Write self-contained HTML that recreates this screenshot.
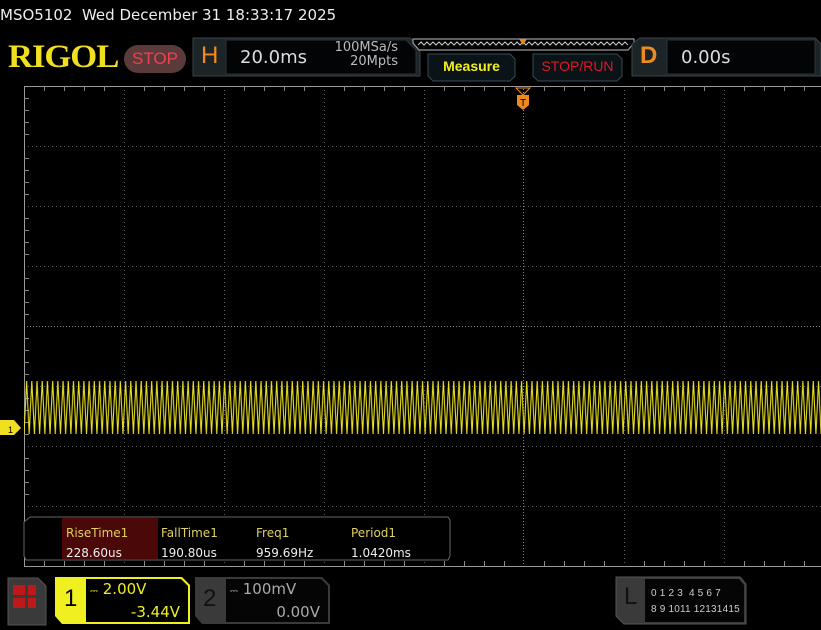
<!DOCTYPE html>
<html><head><meta charset="utf-8"><style>
body{margin:0;width:821px;height:630px;background:#000;overflow:hidden;position:relative;font-family:"DejaVu Sans","Liberation Sans",sans-serif;color:#ddd}
.a{position:absolute}
</style></head><body>
<div class="a" style="left:0;top:6px;font-size:15px;color:#eee;">MSO5102&nbsp; Wed December 31 18:33:17 2025</div>
<div class="a" style="left:8px;top:39px;font-family:'Liberation Serif',serif;font-weight:bold;font-size:33px;color:#f0e020;letter-spacing:-1px;transform:scaleX(1.05);transform-origin:left">RIGOL</div>
<div class="a" style="left:124px;top:45px;width:62px;height:28px;border-radius:14px;background:#5a3a3a;color:#f04050;font-family:'Liberation Sans',sans-serif;font-size:17px;text-align:center;line-height:28px">STOP</div>
<svg class="a" style="left:0;top:0" width="821" height="86">
<path d="M193 38 H410 L420 48 V76 H193 Z" fill="#1c2428" stroke="#3a4448"/>
<path d="M226 40 H406 L416 50 V74 H226 Z" fill="#020406" stroke="#2a3438"/>
<path d="M413 39 H634 V43 L628 50 H419 L413 43Z" fill="#000" stroke="#999" stroke-width="1.2"/>
<polyline points="418,45 421,42 424,45 427,42 430,45 433,42 436,45 439,42 442,45 445,42 448,45 451,42 454,45 457,42 460,45 463,42 466,45 469,42 472,45 475,42 478,45 481,42 484,45 487,42 490,45 493,42 496,45 499,42 502,45 505,42 508,45 511,42 514,45 517,42 520,45 523,42 526,45 529,42 532,45 535,42 538,45 541,42 544,45 547,42 550,45 553,42 556,45 559,42 562,45 565,42 568,45 571,42 574,45 577,42 580,45 583,42 586,45 589,42 592,45 595,42 598,45 601,42 604,45 607,42 610,45 613,42 616,45 619,42 622,45 625,42 628,45" fill="none" stroke="#ccc" stroke-width="1"/>
<path d="M519 39 H527 L523 45Z" fill="#f08a20"/>
<path d="M428 54 H510 L515 59 V76 L510 81 H433 L428 76Z" fill="#0a1418" stroke="#3a4a50"/>
<path d="M533 54 H617 L622 59 V76 L617 81 H538 L533 76Z" fill="#0a1418" stroke="#3a4a50"/>
<path d="M632 44 L640 38 H815 L821 44 V76 H632Z" fill="#1c2428" stroke="#3a4448"/>
<path d="M667 40 H815 V74 H667Z" fill="#020406" stroke="#2a3438"/>
</svg>
<div class="a" style="left:201px;top:42px;font-size:24px;color:#f08a20;font-family:'Liberation Sans',sans-serif">H</div>
<div class="a" style="left:240px;top:47px;font-size:18px;color:#ddd">20.0ms</div>
<div class="a" style="left:322px;top:41px;font-size:13px;color:#bbb;line-height:14px;text-align:right;width:76px">100MSa/s<br>20Mpts</div>
<div class="a" style="left:428px;top:58px;width:87px;text-align:center;font-family:'Liberation Sans',sans-serif;font-weight:bold;font-size:14px;color:#f0f020">Measure</div>
<div class="a" style="left:533px;top:58px;width:89px;text-align:center;font-family:'Liberation Sans',sans-serif;font-size:14px;color:#e01828">STOP/RUN</div>
<div class="a" style="left:640px;top:42px;font-size:24px;color:#f08a20;font-family:'Liberation Sans',sans-serif;font-weight:bold">D</div>
<div class="a" style="left:681px;top:47px;font-size:18px;color:#ddd">0.00s</div>
<svg class="a" style="left:0;top:0" width="821" height="630">
<defs>
<pattern id="w" x="24" y="0" width="5.21" height="630" patternUnits="userSpaceOnUse">
<polyline points="0,434 2.6,381 5.21,434" fill="none" stroke="#e8e020" stroke-width="1.1"/>
</pattern>
</defs>
<g stroke="#5a5a5a" stroke-width="1" stroke-dasharray="1 3">
<line x1="124.5" y1="86" x2="124.5" y2="566"/><line x1="224.5" y1="86" x2="224.5" y2="566"/><line x1="324.5" y1="86" x2="324.5" y2="566"/><line x1="424.5" y1="86" x2="424.5" y2="566"/><line x1="624.5" y1="86" x2="624.5" y2="566"/><line x1="724.5" y1="86" x2="724.5" y2="566"/>
<line x1="24" y1="146.5" x2="821" y2="146.5"/><line x1="24" y1="206.5" x2="821" y2="206.5"/><line x1="24" y1="266.5" x2="821" y2="266.5"/><line x1="24" y1="386.5" x2="821" y2="386.5"/><line x1="24" y1="446.5" x2="821" y2="446.5"/><line x1="24" y1="506.5" x2="821" y2="506.5"/>
</g>
<g stroke="#888" stroke-width="1" stroke-dasharray="1 2">
<line x1="523.5" y1="86" x2="523.5" y2="566"/><line x1="24" y1="326.5" x2="821" y2="326.5"/>
</g>
<g stroke="#999" stroke-width="1">
<line x1="24" y1="86.5" x2="821" y2="86.5"/><line x1="24.5" y1="86" x2="24.5" y2="566"/>
<line x1="24" y1="566.5" x2="821" y2="566.5"/>
</g>
<g stroke="#888" stroke-width="1">
<path d="M44.5 86V91M64.5 86V91M84.5 86V91M104.5 86V91M144.5 86V91M164.5 86V91M184.5 86V91M204.5 86V91M244.5 86V91M264.5 86V91M284.5 86V91M304.5 86V91M344.5 86V91M364.5 86V91M384.5 86V91M404.5 86V91M444.5 86V91M464.5 86V91M484.5 86V91M504.5 86V91M544.5 86V91M564.5 86V91M584.5 86V91M604.5 86V91M644.5 86V91M664.5 86V91M684.5 86V91M704.5 86V91M744.5 86V91M764.5 86V91M784.5 86V91M804.5 86V91"/>
<path d="M44.5 566V561M64.5 566V561M84.5 566V561M104.5 566V561M144.5 566V561M164.5 566V561M184.5 566V561M204.5 566V561M244.5 566V561M264.5 566V561M284.5 566V561M304.5 566V561M344.5 566V561M364.5 566V561M384.5 566V561M404.5 566V561M444.5 566V561M464.5 566V561M484.5 566V561M504.5 566V561M544.5 566V561M564.5 566V561M584.5 566V561M604.5 566V561M644.5 566V561M664.5 566V561M684.5 566V561M704.5 566V561M744.5 566V561M764.5 566V561M784.5 566V561M804.5 566V561"/>
<path d="M24 98.5H29M24 110.5H29M24 122.5H29M24 134.5H29M24 158.5H29M24 170.5H29M24 182.5H29M24 194.5H29M24 218.5H29M24 230.5H29M24 242.5H29M24 254.5H29M24 278.5H29M24 290.5H29M24 302.5H29M24 314.5H29M24 338.5H29M24 350.5H29M24 362.5H29M24 374.5H29M24 398.5H29M24 410.5H29M24 422.5H29M24 434.5H29M24 458.5H29M24 470.5H29M24 482.5H29M24 494.5H29"/>
</g>
<rect x="24" y="378" width="797" height="60" fill="url(#w)"/>
<path d="M516 88 H530 L523 95Z" fill="none" stroke="#f08a20"/>
<path d="M517 95 H529 V105 L523 110 L517 105Z" fill="#f08a20"/>
<text x="523" y="106" font-size="10" text-anchor="middle" fill="#000" font-family="Liberation Sans">T</text>
<path d="M0 420 H14 L21 428 L14 435 H0Z" fill="#f0e020"/>
<text x="8" y="433" font-size="9" fill="#000" font-family="Liberation Sans">1</text>
<path d="M30 517 H448 L450 520 V556 L448 560 H26 L24 556 V522Z" fill="#000" stroke="#666"/>
<rect x="62" y="518" width="96" height="41" fill="#4a0808"/>
<path d="M8 578 H38 L46 586 V625 H8 Z" fill="#3a3a3a" stroke="#555"/>
<rect x="13" y="585" width="12" height="10" fill="#c01818"/><rect x="28" y="585" width="8" height="10" fill="#c01818"/>
<rect x="13" y="598" width="12" height="10" fill="#c01818"/><rect x="28" y="598" width="8" height="10" fill="#c01818"/>
<path d="M55 577 H182 L190 585 V624 H62 L55 616Z" fill="#f0f020"/>
<path d="M86 579 H181 L188 586 V622 H86Z" fill="#000"/>
<path d="M195 577 H322 L330 585 V624 H202 L195 616Z" fill="#3a3a3a"/>
<path d="M226 579 H321 L328 586 V622 H226Z" fill="#050505"/>
<path d="M616 577 H740 L746 584 V624 H624 L616 616Z" fill="#3a3a3a" stroke="#555"/>
<path d="M645 579 H739 L744 585 V622 H645Z" fill="#050505"/>
</svg>
<div class="a" style="left:66px;top:523px;font-size:12px;color:#e0d060;line-height:20px">RiseTime1<br><span style="color:#eee">228.60us</span></div>
<div class="a" style="left:161px;top:523px;font-size:12px;color:#e0d060;line-height:20px">FallTime1<br><span style="color:#eee">190.80us</span></div>
<div class="a" style="left:256px;top:523px;font-size:12px;color:#e0d060;line-height:20px">Freq1<br><span style="color:#eee">959.69Hz</span></div>
<div class="a" style="left:351px;top:523px;font-size:12px;color:#e0d060;line-height:20px">Period1<br><span style="color:#eee">1.0420ms</span></div>
<div class="a" style="left:64px;top:585px;font-size:24px;color:#000;font-family:'Liberation Sans',sans-serif">1</div>
<div class="a" style="left:90px;top:579px;font-size:15px;color:#f0f020;line-height:20px;width:90px"><span style="font-size:10px">&#9107;</span> 2.00V<br><span style="display:block;text-align:right">-3.44V</span></div>
<div class="a" style="left:203px;top:585px;font-size:24px;color:#111;font-family:'Liberation Sans',sans-serif">2</div>
<div class="a" style="left:230px;top:579px;font-size:15px;color:#aaa;line-height:20px;width:90px"><span style="font-size:10px">&#9107;</span> 100mV<br><span style="display:block;text-align:right">0.00V</span></div>
<div class="a" style="left:624px;top:583px;font-size:24px;color:#111;font-family:'Liberation Sans',sans-serif">L</div>
<div class="a" style="left:651px;top:586px;font-size:10px;color:#ccc;line-height:16px;letter-spacing:0.2px;font-family:'Liberation Sans',sans-serif">0 1 2 3&nbsp; 4 5 6 7<br>8 9 1011 12131415</div>
</body></html>
